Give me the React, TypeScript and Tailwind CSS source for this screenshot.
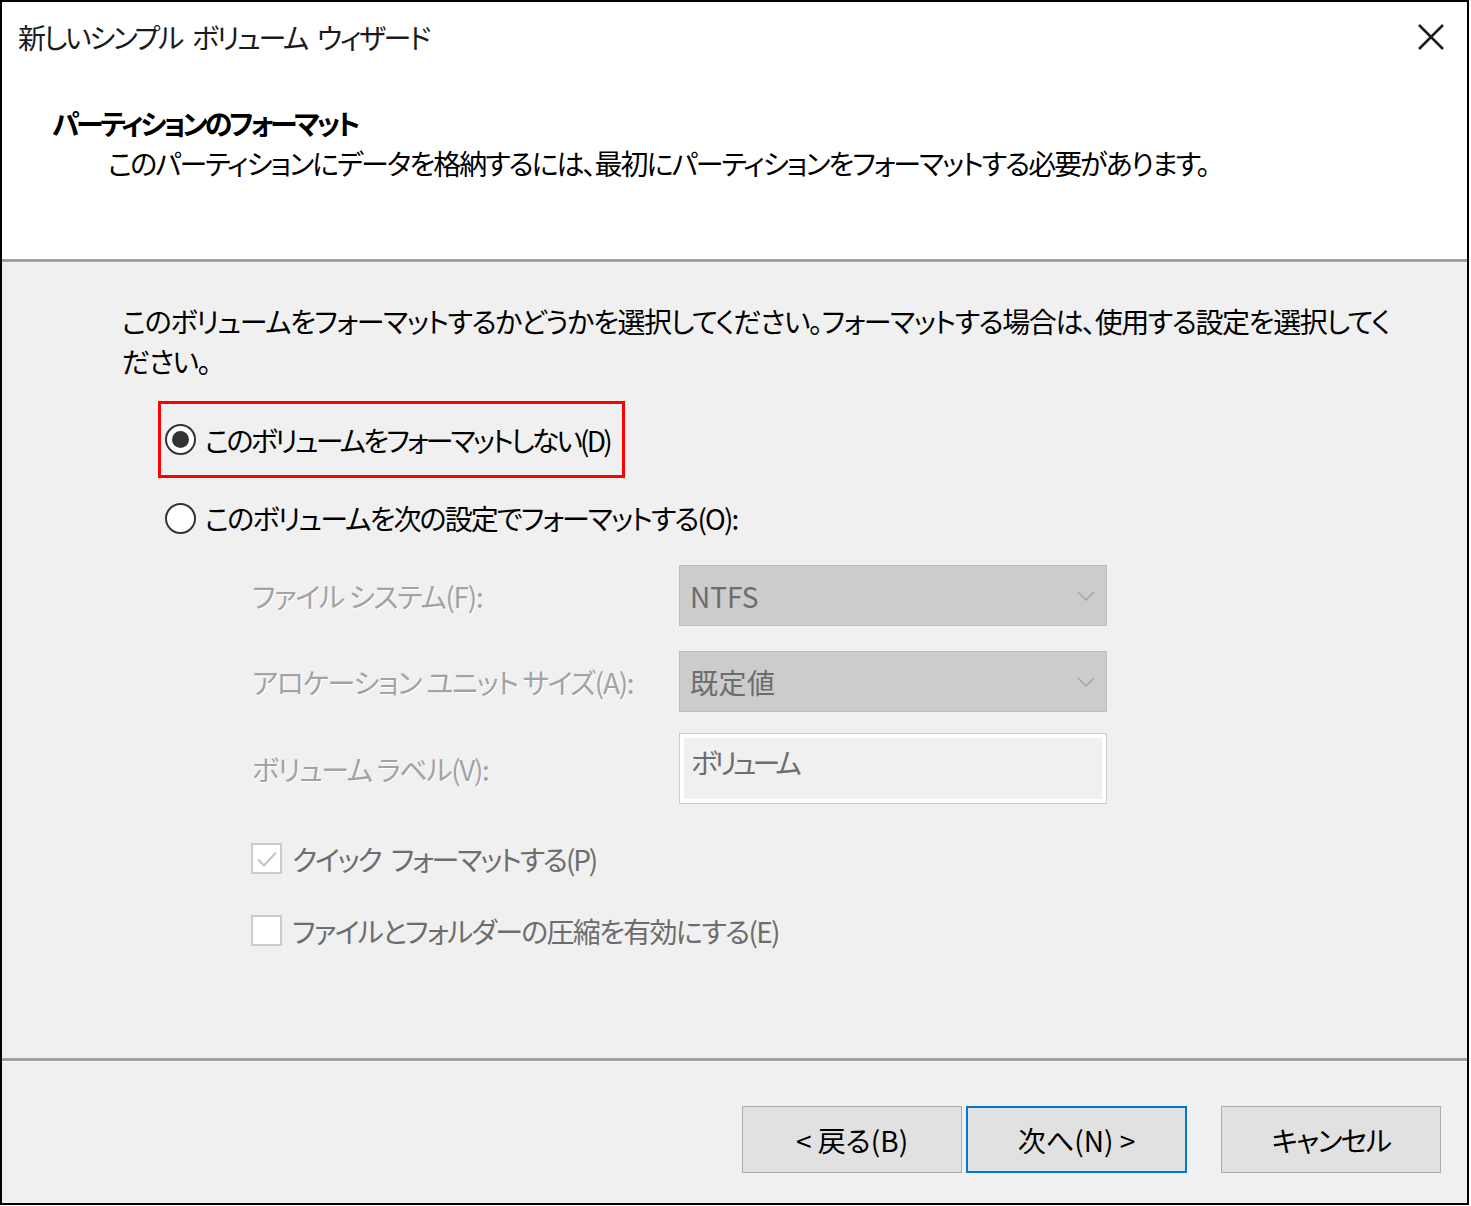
import React from "react";

const font = "font-['Noto_Sans_CJK_JP',sans-serif] [font-feature-settings:'palt']";

function Radio({ checked }: { checked?: boolean }) {
  return (
    <div className="w-[31px] h-[31px] rounded-full border-[2.5px] border-[#333333] bg-white flex items-center justify-center shrink-0">
      {checked && <div className="w-[17px] h-[17px] rounded-full bg-[#333333]" />}
    </div>
  );
}

function Checkbox({ checked }: { checked?: boolean }) {
  return (
    <div className="w-[31px] h-[31px] border-2 border-[#cccccc] bg-white flex items-center justify-center shrink-0">
      {checked && (
        <svg width="22" height="18" viewBox="0 0 22 18" fill="none">
          <path d="M2 9.5 L8 15.5 L20 2.5" stroke="#c4c4c4" strokeWidth="2" />
        </svg>
      )}
    </div>
  );
}

function Chevron() {
  return (
    <svg width="18" height="10" viewBox="0 0 18 10" fill="none">
      <path d="M1 1 L9 9 L17 1" stroke="#a6a6a6" strokeWidth="1.5" />
    </svg>
  );
}

export default function App() {
  return (
    <div className={`w-[1471px] h-[1206px] bg-white ${font}`}>
      <div className="w-[1469px] h-[1205px] border-2 border-black flex flex-col bg-[#f0f0f0] text-black">
        {/* header */}
        <div className="h-[257px] bg-white flex flex-col shrink-0">
          <div className="flex items-center justify-between pt-[15px] pl-[16px] pr-[23px] h-[55px]">
            <div className="text-[28px] leading-[40px] tracking-[-2.3px] [word-spacing:6px] text-[#1a1a1a] whitespace-nowrap">新しいシンプル ボリューム ウィザード</div>
            <svg width="26" height="26" viewBox="0 0 26 26" fill="none">
              <path d="M1 1 L25 25 M25 1 L1 25" stroke="#1a1a1a" strokeWidth="2.5" />
            </svg>
          </div>
          <div className="mt-[48px] pl-[50px] text-[28px] leading-[36px] font-bold tracking-[-3.3px] whitespace-nowrap">パーティションのフォーマット</div>
          <div className="mt-[4px] pl-[106px] text-[28px] leading-[36px] tracking-[-2px] whitespace-nowrap">このパーティションにデータを格納するには、最初にパーティションをフォーマットする必要があります。</div>
        </div>
        <div className="h-[3px] bg-[#a0a0a0] shrink-0" />
        <div className="h-[1px] bg-[#fafafa] shrink-0" />

        {/* body */}
        <div className="flex-1 flex flex-col">
          <div className="mt-[38px] pl-[120px] text-[28px] leading-[40px] tracking-[-1.4px] whitespace-nowrap">
            このボリュームをフォーマットするかどうかを選択してください。フォーマットする場合は、使用する設定を選択してく
            <br />
            ださい。
          </div>

          <div className="mt-[20px] ml-[156px] w-[467px] h-[77px] border-[3px] border-[#ff0000] flex items-center pl-[4px] gap-[9px]">
            <Radio checked />
            <span className="text-[28px] leading-[40px] tracking-[-2.8px] whitespace-nowrap">このボリュームをフォーマットしない(D)</span>
          </div>

          <div className="mt-[20px] ml-[163px] h-[40px] flex items-center gap-[9px]">
            <Radio />
            <span className="text-[28px] leading-[40px] tracking-[-1.9px] whitespace-nowrap">このボリュームを次の設定でフォーマットする(O):</span>
          </div>

          <div className="mt-[27px] ml-[250px] grid grid-cols-[427px_428px] text-[28px]">
            <div className="h-[61px] flex items-center text-[#a3a3a3] tracking-[-1.3px] [text-shadow:1px_1px_0_#ffffff] whitespace-nowrap">ファイル システム(F):</div>
            <div className="h-[61px] bg-[#cccccc] border border-[#bdbdbd] flex items-center justify-between pl-[10px] pr-[11px] text-[#6d6d6d]">
              <span>NTFS</span>
              <Chevron />
            </div>
            <div className="mt-[25px] h-[61px] flex items-center text-[#a3a3a3] tracking-[-1.3px] [text-shadow:1px_1px_0_#ffffff] whitespace-nowrap">アロケーション ユニット サイズ(A):</div>
            <div className="mt-[25px] h-[61px] bg-[#cccccc] border border-[#bdbdbd] flex items-center justify-between pl-[10px] pr-[11px] text-[#6d6d6d]">
              <span className="tracking-[0.5px]">既定値</span>
              <Chevron />
            </div>
            <div className="mt-[21px] h-[71px] flex items-center text-[#a3a3a3] tracking-[-1.4px] [text-shadow:1px_1px_0_#ffffff] whitespace-nowrap">ボリューム ラベル(V):</div>
            <div className="mt-[21px] h-[71px] border border-[#cdcdcd] bg-white p-[4px]">
              <div className="w-full h-full bg-[#f0f0f0] pl-[7px] pt-[6px] leading-[36px] tracking-[-4px] text-[#6d6d6d]">ボリューム</div>
            </div>
          </div>

          <div className="mt-[39px] ml-[249px] h-[31px] flex items-center gap-[10px]">
            <Checkbox checked />
            <span className="text-[28px] leading-[40px] tracking-[-2.1px] [word-spacing:6px] text-[#6d6d6d] whitespace-nowrap">クイック フォーマットする(P)</span>
          </div>
          <div className="mt-[40px] ml-[249px] h-[33px] flex items-center gap-[10px]">
            <Checkbox />
            <span className="text-[28px] leading-[40px] tracking-[-1.7px] text-[#6d6d6d] whitespace-nowrap">ファイルとフォルダーの圧縮を有効にする(E)</span>
          </div>
        </div>

        <div className="h-[3px] bg-[#a0a0a0] shrink-0" />
        <div className="h-[1px] bg-[#fafafa] shrink-0" />

        {/* footer */}
        <div className="h-[141px] shrink-0 flex items-start justify-end pt-[44px] pr-[26px] text-[28px]">
          <button className="w-[220px] h-[67px] bg-[#e1e1e1] border border-[#adadad] flex items-center justify-center text-black">&lt; 戻る(B)</button>
          <button className="ml-[4px] w-[221px] h-[67px] bg-[#e1e1e1] border-2 border-[#0078d7] flex items-center justify-center text-black">次へ(N) &gt;</button>
          <button className="ml-[34px] w-[220px] h-[67px] bg-[#e1e1e1] border border-[#adadad] flex items-center justify-center text-black tracking-[-1.6px]">キャンセル</button>
        </div>
      </div>
    </div>
  );
}
